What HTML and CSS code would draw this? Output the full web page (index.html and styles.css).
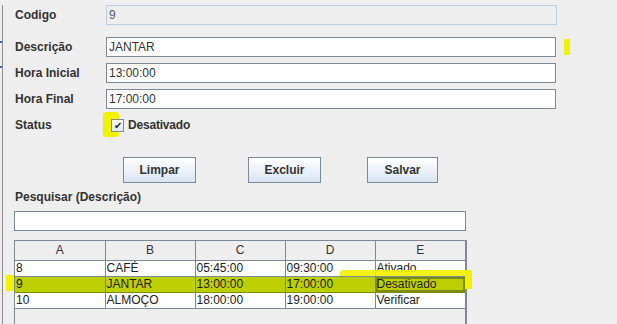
FILE: index.html
```html
<!DOCTYPE html>
<html>
<head>
    <title>Cadastro de Refeição</title>
    <link rel="stylesheet" href="styles.css">
</head>
<body>
    <div class="frame">
        <div class="form-row row-codigo">
            <label class="field-label">Codigo</label>
            <div class="field field-disabled">9</div>
        </div>
        <div class="form-row row-first">
            <label class="field-label">Descrição</label>
            <div class="field">JANTAR</div>
        </div>
        <div class="form-row">
            <label class="field-label">Hora Inicial</label>
            <div class="field">13:00:00</div>
        </div>
        <div class="form-row">
            <label class="field-label">Hora Final</label>
            <div class="field">17:00:00</div>
        </div>
        <div class="form-row row-status">
            <label class="field-label">Status</label>
            <div class="check-wrap">
                <span class="checkbox">&#10004;</span>
                <span class="check-text">Desativado</span>
            </div>
        </div>

        <div class="buttons">
            <button class="btn">Limpar</button>
            <button class="btn">Excluir</button>
            <button class="btn">Salvar</button>
        </div>

        <div class="search-label">Pesquisar (Descrição)</div>
        <div class="search-field"></div>

        <div class="table-pane">
            <table class="grid">
                <thead>
                    <tr><th>A</th><th>B</th><th>C</th><th>D</th><th>E</th></tr>
                </thead>
                <tbody>
                    <tr><td>8</td><td>CAFÉ</td><td>05:45:00</td><td>09:30:00</td><td>Ativado</td></tr>
                    <tr class="selected"><td>9</td><td>JANTAR</td><td>13:00:00</td><td>17:00:00</td><td class="focus">Desativado</td></tr>
                    <tr><td>10</td><td>ALMOÇO</td><td>18:00:00</td><td>19:00:00</td><td>Verificar</td></tr>
                </tbody>
            </table>
        </div>
    </div>

    <!-- highlighter marks drawn over the screenshot -->
    <div class="mark mark-right"></div>
    <div class="mark mark-check"></div>
    <div class="mark mark-row-left"></div>
    <div class="mark mark-row-top"></div>
    <div class="mark mark-row-right"></div>
    <div class="blue-tick tick-1"></div>
    <div class="blue-tick tick-2"></div>
</body>
</html>
```

FILE: styles.css
```css
body {
    margin: 0;
    background-color: #eeeeee;
    font-family: "Liberation Sans", Arial, sans-serif;
    font-size: 12px;
    color: #333333;
    width: 617px;
    height: 324px;
    overflow: hidden;
    position: relative;
}
.frame {
    margin-left: 2px;
    border-left: 1px solid #8e8e8e;
    height: 324px;
    padding-left: 11px;
    box-sizing: border-box;
}
.form-row {
    display: flex;
    align-items: center;
    height: 20px;
    margin-top: 6px;
}
.row-codigo {
    margin-top: 5px;
}
.row-first {
    margin-top: 12px;
}
.field-label {
    width: 91px;
    font-weight: bold;
    color: #333333;
    padding-left: 1px;
}
.field {
    width: 450px;
    height: 20px;
    box-sizing: border-box;
    border: 1px solid #7a8a99;
    box-shadow: inset -1px -1px 0 #ffffff;
    background-color: #ffffff;
    padding: 2px 0 0 2px;
    line-height: 15px;
    color: #333333;
}
.field-disabled {
    width: 451px;
    border: 1px solid #b8cfe5;
    box-shadow: none;
    background-color: #eeeeee;
    color: #555f6b;
}
.row-status {
    margin-top: 9px;
    height: 14px;
}
.check-wrap {
    display: flex;
    align-items: center;
    margin-left: 5px;
}
.checkbox {
    width: 13px;
    height: 13px;
    box-sizing: border-box;
    border: 1px solid #7a8a99;
    background: linear-gradient(#ffffff, #dde8f3);
    font-size: 10px;
    line-height: 11px;
    text-align: center;
    color: #222222;
    position: relative;
    z-index: 2;
}
.check-text {
    margin-left: 4px;
    font-weight: bold;
    color: #333333;
    letter-spacing: -0.2px;
}
.buttons {
    display: flex;
    margin-top: 25px;
    padding-left: 109px;
}
.btn {
    height: 26px;
    width: 73px;
    border: 1px solid #7a8a99;
    background: linear-gradient(#ffffff, #d9e5f2);
    font-family: "Liberation Sans", Arial, sans-serif;
    font-size: 12px;
    font-weight: bold;
    color: #333333;
    padding: 0;
}
.btn + .btn {
    margin-left: 52px;
}
.btn:last-child {
    margin-left: 46px;
    width: 71px;
}
.search-label {
    margin-top: 7px;
    font-weight: bold;
    line-height: 14px;
    padding-left: 1px;
}
.search-field {
    margin-top: 7px;
    width: 452px;
    height: 20px;
    box-sizing: border-box;
    border: 1px solid #7a8a99;
    box-shadow: inset -1px -1px 0 #ffffff;
    background-color: #ffffff;
}
.table-pane {
    margin-top: 9px;
    width: 453px;
    height: 90px;
    box-sizing: border-box;
    border-left: 1px solid #7a8a99;
    border-right: 2px solid #7a8a99;
    border-top: 1px solid #7a8a99;
}
.grid {
    border-collapse: collapse;
    width: 450px;
    table-layout: fixed;
    font-size: 12px;
}
.grid th {
    height: 19px;
    box-sizing: border-box;
    font-weight: normal;
    color: #333333;
    background-color: #eeeeee;
    border-right: 1px solid #7a8a99;
    border-bottom: 1px solid #7a8a99;
    text-align: center;
    padding: 0;
}
.grid th:last-child {
    border-right: none;
}
.grid td {
    height: 15px;
    background-color: #ffffff;
    border-right: 1px solid #7a8a99;
    border-bottom: 1px solid #7a8a99;
    padding: 0 0 0 1px;
    line-height: 15px;
    color: #222222;
    white-space: nowrap;
    overflow: hidden;
}
.grid td:last-child {
    border-right: none;
}
.grid tr.selected td {
    background-color: #bccf00;
    border-right-color: #7c8a10;
    border-bottom-color: #7c8a10;
}
.grid tr.selected td.focus {
    box-shadow: inset 0 0 0 2px #7c8a10;
}
.mark {
    position: absolute;
    background-color: #f2f200;
}
.mark-right {
    left: 564px;
    top: 39px;
    width: 6px;
    height: 16px;
}
.mark-check {
    left: 103px;
    top: 112px;
    width: 16px;
    height: 25px;
    border-radius: 3px;
    z-index: 1;
}
.mark-row-left {
    left: 6px;
    top: 275px;
    width: 8px;
    height: 16px;
}
.mark-row-top {
    left: 340px;
    top: 270px;
    width: 128px;
    height: 6px;
    border-radius: 3px 0 0 0;
    opacity: 0.9;
}
.mark-row-right {
    left: 465px;
    top: 270px;
    width: 7px;
    height: 19px;
}
.blue-tick {
    position: absolute;
    left: 0;
    width: 2px;
    height: 2px;
    background-color: #3a5fd0;
}
.tick-1 {
    top: 41px;
}
.tick-2 {
    top: 66px;
}
```
